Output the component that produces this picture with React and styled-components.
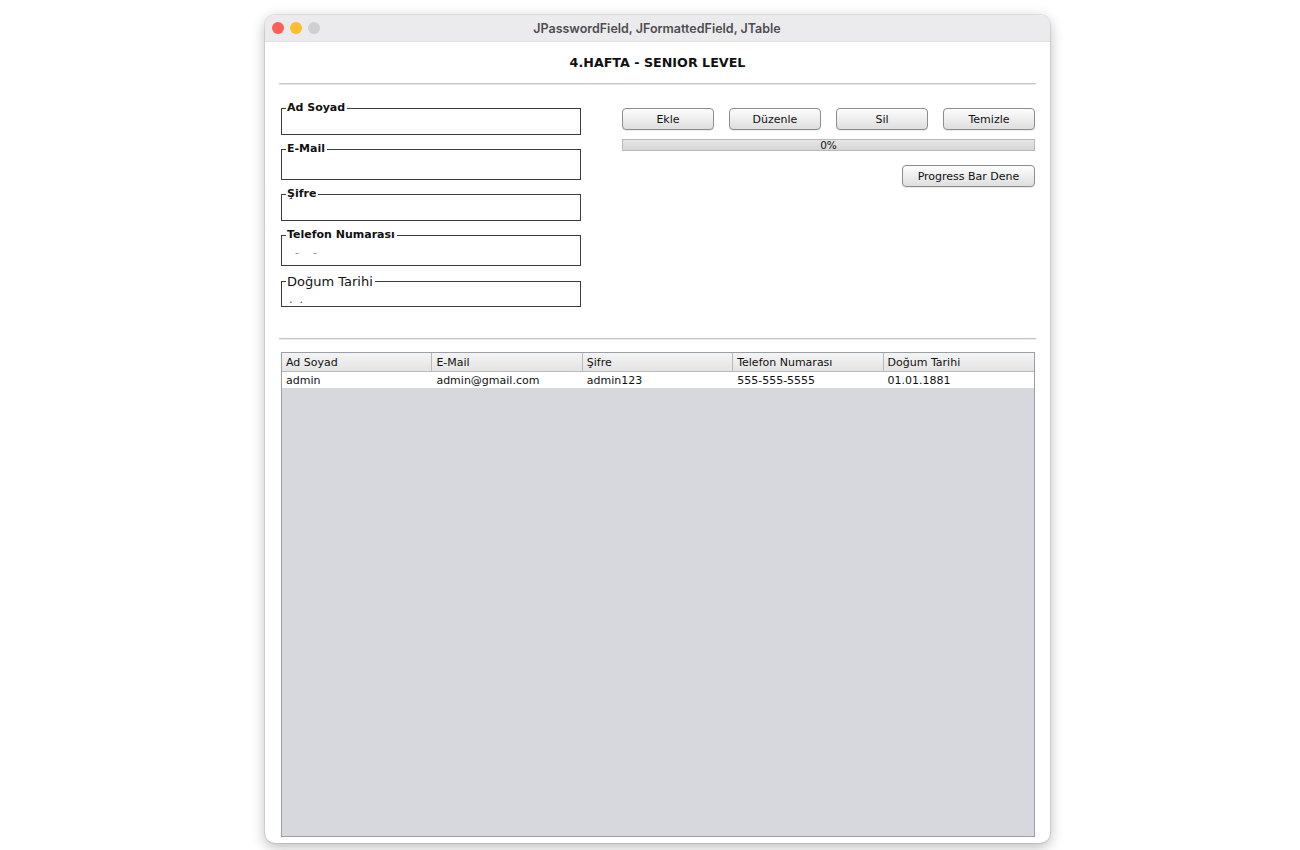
import React from "react";
import styled, { createGlobalStyle } from "styled-components";

const GlobalStyle = createGlobalStyle`
  html, body {
    margin: 0;
    padding: 0;
    background: #ffffff;
  }
  body {
    font-family: "DejaVu Sans", "Noto Sans", sans-serif;
  }
`;

const Page = styled.div`
  width: 1300px;
  height: 850px;
  padding-top: 15px;
  box-sizing: border-box;
  overflow: hidden;
`;

const Window = styled.div`
  margin-left: 265px;
  width: 785px;
  height: 828px;
  display: flex;
  flex-direction: column;
  background: #ffffff;
  border-radius: 10px;
  overflow: hidden;
  box-shadow: 0 0 0 1px rgba(0, 0, 0, 0.08), 0 4px 14px rgba(0, 0, 0, 0.28);
`;

const TitleBar = styled.div`
  height: 27px;
  flex-shrink: 0;
  display: flex;
  align-items: center;
  padding-left: 7px;
  background: #ebebee;
  border-bottom: 1px solid #e0e0e2;
  box-sizing: border-box;
`;

const Lights = styled.div`
  display: flex;
  gap: 6px;
`;

const Light = styled.span`
  width: 12px;
  height: 12px;
  border-radius: 50%;
  background: ${(p) => p.color};
`;

const WindowTitle = styled.div`
  flex: 1;
  text-align: center;
  margin-right: 56px;
  font-family: Inter, "Liberation Sans", sans-serif;
  font-weight: 600;
  font-size: 12.5px;
  color: #4d4d4f;
`;

const Content = styled.div`
  flex: 1;
  display: flex;
  flex-direction: column;
  padding: 0 14px 6px;
  min-height: 0;
`;

const Heading = styled.div`
  height: 41px;
  display: flex;
  align-items: center;
  justify-content: center;
  font-weight: bold;
  font-size: 12.7px;
  color: #111;
`;

const Divider = styled.div`
  height: 1px;
  background: #c4c8ce;
  border-bottom: 1px solid #e6e8eb;
`;

const FormArea = styled.div`
  height: 253px;
  display: grid;
  grid-template-columns: 300px 413px;
  column-gap: 41px;
  padding: 17px 2px 0;
  box-sizing: border-box;
`;

const Fields = styled.div`
  display: flex;
  flex-direction: column;
  gap: 8px;
`;

const Field = styled.fieldset`
  margin: 0;
  padding: 0 2px;
  border: 1px solid #3c3c3c;
  min-width: 0;
`;

const Legend = styled.legend`
  padding: 0 2px 0 1px;
  margin-left: 2px;
  font-size: ${(p) => (p.plain ? "13px" : "11px")};
  line-height: ${(p) => (p.plain ? "15px" : "12px")};
  font-weight: ${(p) => (p.plain ? "normal" : "bold")};
  color: #111;
`;

const FieldBody = styled.div`
  height: ${(p) => p.h}px;
  display: flex;
  align-items: ${(p) => (p.bottom ? "flex-end" : "center")};
  padding-left: ${(p) => p.pad || 4}px;
  font-size: 11px;
  line-height: 12px;
  color: ${(p) => p.tone || "#8a8a8a"};
  white-space: pre;
`;

const Actions = styled.div`
  display: flex;
  flex-direction: column;
  padding-top: 6px;
`;

const ButtonRow = styled.div`
  display: flex;
  gap: 15px;
`;

const Button = styled.button`
  width: ${(p) => p.w || 92}px;
  height: 22px;
  padding: 0;
  border: 1px solid #8c8c8c;
  border-radius: 4px;
  background: linear-gradient(#fdfdfd, #ececec 55%, #dedede);
  font-family: "DejaVu Sans", sans-serif;
  font-size: 11px;
  color: #111;
  box-shadow: 0 1px 0 rgba(0, 0, 0, 0.08);
`;

const Progress = styled.div`
  margin-top: 9px;
  height: 12px;
  border: 1px solid #b8b8b8;
  box-sizing: border-box;
  background: linear-gradient(#e6e6e6, #d6d6d6);
  display: flex;
  align-items: center;
  justify-content: center;
  font-size: 10.5px;
  line-height: 10px;
  color: #111;
`;

const TestRow = styled.div`
  margin-top: 14px;
  display: flex;
  justify-content: flex-end;
`;

const TableArea = styled.div`
  flex: 1;
  display: flex;
  flex-direction: column;
  padding: 12px 1px 0 2px;
  min-height: 0;
`;

const Table = styled.div`
  flex: 1;
  display: flex;
  flex-direction: column;
  border: 1px solid #9ba0a8;
  background: #d6d8dd;
`;

const HeaderRow = styled.div`
  display: grid;
  grid-template-columns: repeat(5, 1fr);
  height: 19px;
  background: linear-gradient(#f4f4f4, #e4e4e4);
  border-bottom: 1px solid #b9b9b9;
  box-sizing: border-box;
`;

const HeaderCell = styled.div`
  display: flex;
  align-items: center;
  padding-left: 4px;
  font-size: 11px;
  color: #111;
  border-right: 1px solid #b9b9b9;
  &:last-child {
    border-right: none;
  }
`;

const DataRow = styled.div`
  display: grid;
  grid-template-columns: repeat(5, 1fr);
  height: 16px;
  background: #ffffff;
`;

const Cell = styled.div`
  display: flex;
  align-items: center;
  padding-left: 4px;
  font-size: 11px;
  color: #111;
`;

const columns = ["Ad Soyad", "E-Mail", "Şifre", "Telefon Numarası", "Doğum Tarihi"];
const rows = [["admin", "admin@gmail.com", "admin123", "555-555-5555", "01.01.1881"]];

const App = () => {
  return (
    <Page>
      <GlobalStyle />
      <Window>
        <TitleBar>
          <Lights>
            <Light color="#fe5f57" />
            <Light color="#febc2e" />
            <Light color="#cfced2" />
          </Lights>
          <WindowTitle>JPasswordField, JFormattedField, JTable</WindowTitle>
        </TitleBar>

        <Content>
          <Heading>4.HAFTA - SENIOR LEVEL</Heading>
          <Divider />

          <FormArea>
            <Fields>
              <Field>
                <Legend>Ad Soyad</Legend>
                <FieldBody h={20} />
              </Field>
              <Field>
                <Legend>E-Mail</Legend>
                <FieldBody h={24} />
              </Field>
              <Field>
                <Legend>Şifre</Legend>
                <FieldBody h={20} />
              </Field>
              <Field>
                <Legend>Telefon Numarası</Legend>
                <FieldBody h={24} pad={11}>{"-    -"}</FieldBody>
              </Field>
              <Field>
                <Legend plain>Doğum Tarihi</Legend>
                <FieldBody h={17} bottom pad={5} tone="#444">{".  ."}</FieldBody>
              </Field>
            </Fields>

            <Actions>
              <ButtonRow>
                <Button>Ekle</Button>
                <Button>Düzenle</Button>
                <Button>Sil</Button>
                <Button>Temizle</Button>
              </ButtonRow>
              <Progress>0%</Progress>
              <TestRow>
                <Button w={133}>Progress Bar Dene</Button>
              </TestRow>
            </Actions>
          </FormArea>

          <Divider />

          <TableArea>
            <Table>
              <HeaderRow>
                {columns.map((c) => (
                  <HeaderCell key={c}>{c}</HeaderCell>
                ))}
              </HeaderRow>
              {rows.map((r, i) => (
                <DataRow key={i}>
                  {r.map((v, j) => (
                    <Cell key={j}>{v}</Cell>
                  ))}
                </DataRow>
              ))}
            </Table>
          </TableArea>
        </Content>
      </Window>
    </Page>
  );
};

export default App;
